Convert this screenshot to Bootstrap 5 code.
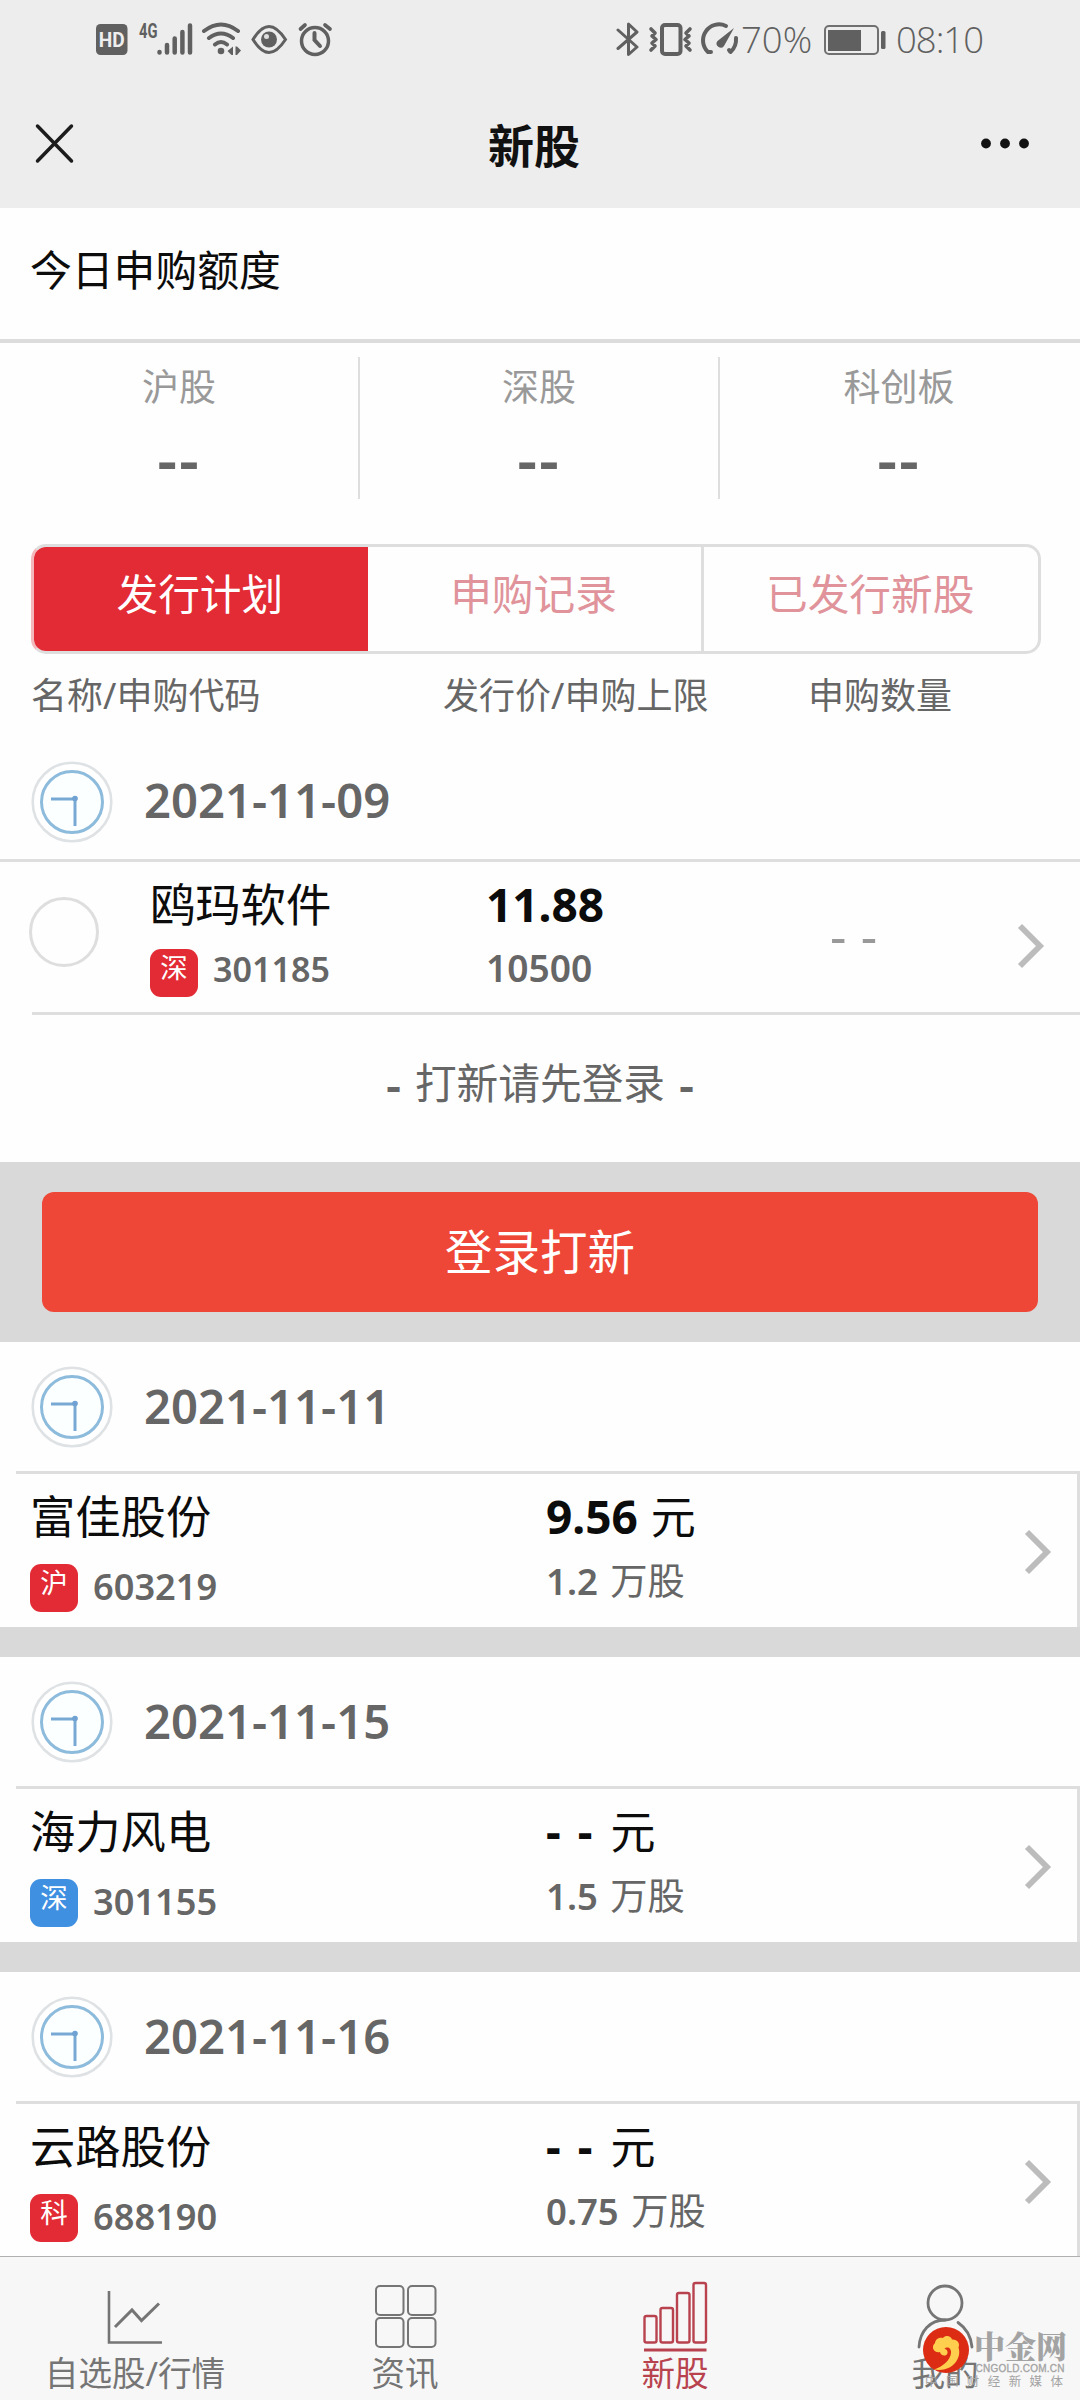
<!DOCTYPE html>
<html lang="zh-CN">
<head>
<meta charset="utf-8">
<meta name="viewport" content="width=device-width, initial-scale=1">
<title>新股</title>
<link href="https://cdn.jsdelivr.net/npm/bootstrap@5.3.0/dist/css/bootstrap.min.css" rel="stylesheet">
<style>
body{width:1080px;height:2400px;overflow:hidden;background:#fefefe;color:#0c0c0c;font-family:"Noto Sans","Noto Sans CJK SC",sans-serif;position:relative}
.screen{height:2400px}
.topbar{height:208px;background:#ededed}
.status{height:78px;padding:0 97px 0 96px;color:#606060}
.status svg{display:block;flex:none}
.status-num{font-family:"Open Sans","Noto Sans",sans-serif;font-weight:300;font-size:36.5px;line-height:40px;white-space:nowrap}
.clock-num{width:95px;letter-spacing:-1px}
.titlebar{height:130px;padding:0 49px 0 34px}
.titlebar h1{font-size:46px;line-height:60px;font-weight:700;color:#111;padding:3px 0 0 13px}
.limit-head{height:135px;border-bottom:4px solid #dcdcdc;padding:0 0 6px 30px;font-size:41.8px}
.quota{padding:14px 2px 0 0}
.quota .col{height:142px;text-align:center}
.quota .col+.col{border-left:2px solid #dedede}
.quota .col:first-child{flex:0 0 358px}
.q-name{font-size:37px;line-height:60px;color:#999}
.q-val{font-size:62px;line-height:60px;font-weight:600;color:#666;letter-spacing:2px;margin-top:11px}
.seg{margin:45px 39px 0 31px;height:110px;border:3px solid #dedede;border-left-color:#f3b9bd;border-radius:15px;overflow:hidden}
.seg .nav-link{border-radius:0;padding:0 2px 10px 0;color:#e0939a;font-size:41.7px;line-height:94px;height:104px}
.seg .nav-link+.nav-link{border-left:3px solid #dedede}
.seg .nav-link.active{background:#e22b35;color:#fff}
.seg .nav-link.active+.nav-link{border-left:0}
.cols{height:91px;padding:22px 0 0 31px;font-size:36px;line-height:40px;color:#666}
.cols span:nth-child(1){width:412px}.cols span:nth-child(2){width:365px}
.day{height:129px;padding:1px 0 0 31px;gap:31px;font-weight:600;font-size:47.2px;line-height:60px;color:#666}
.day.first-day{height:114px;padding-top:0}
.day span{padding-bottom:3px}
.first-day span{padding-bottom:5px}
.item{height:153px;border-right:3px solid #dedede;padding-left:30px}
.rule{height:3px;background:#dedede;margin-left:16px}
.nm{font-size:45.3px;line-height:60px;margin-top:13px;white-space:nowrap}
.pr{font-size:46px;line-height:60px;font-weight:700;margin-top:12px;white-space:nowrap}
.pr i,.qt i{font-style:normal;font-weight:400}
.pr i{font-size:45px;margin-left:1px}
.qt i{font-size:37.3px;margin-left:3px}
.no-price{word-spacing:5px}
.sub2{margin-top:17px;height:48px;gap:15px;font-size:36.2px;line-height:45px;font-weight:600;color:#666}
.qt{margin-top:17px;font-size:36.5px;line-height:34px;font-weight:600;color:#666;white-space:nowrap}
.tag{width:48px;height:48px;border-radius:11px;background:#e22b35;color:#fff;font-size:27.5px;line-height:38px;text-align:center;font-weight:400}
.tag.blue{background:#4090e2}
.c1{width:516px}.c2{width:478px}
.arrow{margin-top:55px;display:block}
.item.featured{height:150px;border:0}
.featured .sub2,.featured .qt{margin-top:14px;line-height:40px}
.featured .sub2{font-size:34.1px}
.featured .qt{font-size:37.2px}
.featured .pick{width:70px;height:70px;border:3px solid #dedede;border-radius:50%;margin:35px 0 0 -1px}
.featured .c1{width:336px;margin-left:51px}
.featured .c2{width:344px}
.featured .amount{width:187px;font-size:51px;line-height:60px;margin-top:43px;color:#999;white-space:nowrap;word-spacing:1px}
.featured .arrow{margin-top:61px}
.prompt{height:147px;font-size:41.7px;color:#666;padding-bottom:10px;gap:14px}
.prompt b{font-size:47px;font-weight:600;line-height:50px}
.band{background:#d9d9d9;height:30px}
.band.login{height:180px;padding:30px 42px}
.login .btn{height:120px;width:100%;background:#ee4737;color:#fff;border:0;border-radius:12px;font-size:47.5px;line-height:60px;padding-bottom:7px}
.tabs{height:144px;bottom:0;left:0;width:1080px;background:#f7f7f7;border-top:1.5px solid #b0b0b0}
.tabs a{text-decoration:none;color:#757575;font-size:33.6px;line-height:36px;padding-top:20px}
.tabs a.on{color:#b8434f}
.tabs svg{display:block;width:80px;height:78px}
.mark-site{right:0;bottom:0;width:160px;height:80px}
.mark-site text{fill:#a3a3a3}
</style>
</head>
<body>
<svg width="0" height="0" class="position-absolute">
<symbol id="clock" viewBox="0 0 82 82"><circle cx="41" cy="41" r="39.300" fill="#fff" stroke="#dfe2e4" stroke-width="2.600"/><circle cx="41" cy="41" r="30.500" fill="#fcffff" stroke="#8dbbdc" stroke-width="3"/><path d="M20 38H44M44 37V65" fill="none" stroke="#78a9d4" stroke-width="3"/><circle cx="44" cy="37.500" r="2.800" fill="#6fa2d2"/></symbol>
<symbol id="chev" viewBox="0 0 28 46"><path d="M3 3L23 23L3 43" fill="none" stroke="#bcbcbc" stroke-width="5.800"/></symbol>
</svg>
<div class="screen d-flex flex-column">
<header class="topbar">
  <div class="status d-flex justify-content-between align-items-center">
    <svg width="240" height="40" viewBox="0 0 240 40" fill="none" stroke="#606060" stroke-linecap="round">
      <rect x="0" y="5" width="31.500" height="31" rx="4.500" fill="#606060" stroke="none"/>
      <text x="15.800" y="28" text-anchor="middle" font-family="Roboto" font-weight="700" font-size="20.500" textLength="26" lengthAdjust="spacingAndGlyphs" fill="#eee" stroke="none">HD</text>
      <text x="43" y="18.500" font-family="Roboto" font-weight="700" font-size="19.500" textLength="18.500" lengthAdjust="spacingAndGlyphs" fill="#606060" stroke="none">4G</text>
      <g stroke-width="4.500"><path d="M63.500 33V33.500M71 26V33.500M78.700 19.500V33.500M86.400 13V33.500M94 6.500V33.500"/></g>
      <g stroke-width="4"><path d="M108 12Q125 -1 142 12M113 19Q125 10 137 19M119 25.500Q125 20.500 131 25.500"/></g>
      <circle cx="125" cy="32" r="3.300" fill="#606060" stroke="none"/>
      <path d="M137 27.500V36H135.500L131.500 32ZM139.500 27.500H141L145 31.500L141 36H139.500Z" fill="#606060" stroke="none"/>
      <path d="M157 20.500Q165 7.500 173 7.500T189.500 20.500Q181 33.500 173 33.500T157 20.500Z" stroke-width="3"/><circle cx="173" cy="20.500" r="8" fill="#606060" stroke="none"/><circle cx="170.500" cy="17.500" r="2.500" fill="#ddd" stroke="none"/>
      <circle cx="219" cy="22" r="13.500" stroke-width="3.500"/><path d="M218.500 14V21L224 27" stroke-width="4"/><path d="M204.500 10L209 6M229 6L234 10" stroke-width="3.700"/>
    </svg>
    <div class="d-flex align-items-center">
      <svg width="125" height="40" viewBox="0 0 125 40" fill="none" stroke="#606060" stroke-linecap="round" stroke-linejoin="round">
        <path d="M2 11L21 28L12.500 35.500V5L21 13L2 29.500" stroke-width="3"/>
        <path d="M35 10L39 14L36 17L40 20.500L36 24L39 27L35 31M74 10L70 14L73 17L69 20.500L73 24L70 27L74 31" stroke-width="3.600"/>
        <rect x="46" y="6" width="18.500" height="29" rx="3" stroke-width="4"/>
        <path d="M110 7A16 16 0 0 0 92 33H95M120 19A17 17 0 0 1 114.500 33L113 31" stroke-width="4"/>
        <path d="M118 9L108 27A4 4 0 0 1 101.500 22Z" fill="#606060" stroke="none"/>
      </svg>
      <span class="status-num" style="width:83px">70%</span>
      <svg width="64" height="40" viewBox="0 0 64 40"><rect x="1" y="7" width="53" height="28" rx="4" fill="none" stroke="#707070" stroke-width="2"/><rect x="4" y="11" width="33" height="21" fill="#606060"/><rect x="57" y="12" width="4.500" height="18" rx="1.500" fill="#606060"/></svg>
      <span class="status-num clock-num ps-2">08:10</span>
    </div>
  </div>
  <div class="titlebar d-flex justify-content-between align-items-center">
    <svg width="42" height="42" viewBox="0 0 42 42"><path d="M3.500 4L37.500 39M37.500 4L3.500 39" stroke="#1c1c1c" stroke-width="3.500" stroke-linecap="round"/></svg>
    <h1 class="m-0">新股</h1>
    <svg width="52" height="12" viewBox="0 0 52 12" fill="#111"><circle cx="7" cy="6.500" r="4.900"/><circle cx="26" cy="6.500" r="4.900"/><circle cx="45" cy="6.500" r="4.900"/></svg>
  </div>
</header>
<main>
  <div class="limit-head d-flex align-items-center">今日申购额度</div>
  <div class="quota row g-0">
    <div class="col"><div class="q-name">沪股</div><div class="q-val">--</div></div>
    <div class="col"><div class="q-name">深股</div><div class="q-val">--</div></div>
    <div class="col"><div class="q-name">科创板</div><div class="q-val">--</div></div>
  </div>
  <nav class="seg nav nav-pills nav-justified flex-nowrap">
    <a class="nav-link active">发行计划</a><a class="nav-link">申购记录</a><a class="nav-link">已发行新股</a>
  </nav>
  <div class="cols d-flex"><span>名称/申购代码</span><span>发行价/申购上限</span><span>申购数量</span></div>

  <div class="day first-day d-flex align-items-center"><svg width="82" height="82"><use href="#clock"/></svg><span>2021-11-09</span></div>
  <div class="rule ms-0"></div>
  <div class="item featured d-flex">
    <div class="pick"></div>
    <div class="c1"><div class="nm">鸥玛软件</div><div class="sub2 d-flex"><span class="tag">深</span>301185</div></div>
    <div class="c2"><div class="pr">11.88</div><div class="qt">10500</div></div>
    <div class="amount">- -</div>
    <svg class="arrow" width="28" height="46"><use href="#chev"/></svg>
  </div>
  <div class="rule" style="margin-left:32px"></div>
  <div class="prompt d-flex align-items-center justify-content-center"><b>-</b>打新请先登录<b>-</b></div>
  <div class="band login"><button class="btn">登录打新</button></div>

  <div class="day d-flex align-items-center"><svg width="82" height="82"><use href="#clock"/></svg><span>2021-11-11</span></div>
  <div class="rule"></div>
  <div class="item d-flex">
    <div class="c1"><div class="nm">富佳股份</div><div class="sub2 d-flex"><span class="tag">沪</span>603219</div></div>
    <div class="c2"><div class="pr">9.56 <i>元</i></div><div class="qt">1.2 <i>万股</i></div></div>
    <svg class="arrow" width="28" height="46"><use href="#chev"/></svg>
  </div>
  <div class="band"></div>

  <div class="day d-flex align-items-center"><svg width="82" height="82"><use href="#clock"/></svg><span>2021-11-15</span></div>
  <div class="rule"></div>
  <div class="item d-flex">
    <div class="c1"><div class="nm">海力风电</div><div class="sub2 d-flex"><span class="tag blue">深</span>301155</div></div>
    <div class="c2"><div class="pr no-price">- - <i>元</i></div><div class="qt">1.5 <i>万股</i></div></div>
    <svg class="arrow" width="28" height="46"><use href="#chev"/></svg>
  </div>
  <div class="band"></div>

  <div class="day d-flex align-items-center"><svg width="82" height="82"><use href="#clock"/></svg><span>2021-11-16</span></div>
  <div class="rule"></div>
  <div class="item d-flex">
    <div class="c1"><div class="nm">云路股份</div><div class="sub2 d-flex"><span class="tag">科</span>688190</div></div>
    <div class="c2"><div class="pr no-price">- - <i>元</i></div><div class="qt">0.75 <i>万股</i></div></div>
    <svg class="arrow" width="28" height="46"><use href="#chev"/></svg>
  </div>
</main>
</div>
<nav class="tabs position-absolute d-flex">
  <a class="col-3 d-flex flex-column align-items-center"><svg viewBox="0 0 80 78" fill="none" stroke="#757575"><path d="M14 14V65.500H67" stroke-width="2.600"/><path d="M20 50L37 33L46.500 43.500L64 26.500" stroke-width="3"/></svg>自选股/行情</a>
  <a class="col-3 d-flex flex-column align-items-center"><svg viewBox="0 0 80 78" fill="none" stroke="#757575" stroke-width="2"><rect x="11" y="9" width="27.500" height="29" rx="4"/><rect x="43" y="9" width="27.500" height="29" rx="4"/><rect x="11" y="41" width="27.500" height="29" rx="4"/><rect x="43" y="41" width="27.500" height="29" rx="4"/></svg>资讯</a>
  <a class="on col-3 d-flex flex-column align-items-center"><svg viewBox="0 0 80 78" fill="none" stroke="#b8434f" stroke-width="2.400"><rect x="9.500" y="39" width="12" height="26.500" rx="2"/><rect x="25.500" y="31" width="12.500" height="34.500" rx="2"/><rect x="42" y="16" width="12.500" height="49.500" rx="2"/><rect x="58.500" y="6" width="12.500" height="59.500" rx="2"/><path d="M9 73H71.500" stroke-width="3"/></svg>新股</a>
  <a class="col-3 d-flex flex-column align-items-center"><svg viewBox="0 0 80 78" fill="none" stroke="#757575" stroke-width="2.800"><circle cx="40" cy="26" r="17"/><path d="M14 70C15 54 25 43 40 43M53 45.500C61 51 66 59 67 70" stroke-linecap="round"/></svg>我的</a>
</nav>
<svg class="mark-site position-absolute" viewBox="0 0 160 80">
  <circle cx="26" cy="30" r="23" fill="#dc2c14"/>
  <path d="M14 49.500C23 46.500 30.500 40 31 33C31.500 28 27 26 24.500 29C26 29 28 30.500 27.500 33C26.500 37 20.500 36 20 32C14 33.500 10.500 27 15 23C15.500 18.500 20 17 23 18C26 14.500 31 16 32 19.500C37 19 40.500 23 38.500 27.500C42 38 33 50 19 50Z" fill="#ffcf4d"/>
  <text x="54" y="38" font-family="Noto Serif CJK SC,Noto Sans CJK SC" font-weight="900" font-size="31">中金网</text>
  <text x="55.500" y="52" font-family="Liberation Sans" font-size="10" textLength="89" stroke="#a3a3a3" stroke-width=".3">CNGOLD.COM.CN</text>
  <text x="5" y="66" font-family="Noto Sans CJK SC" font-size="12.500" textLength="138">中国财经新媒体</text>
</svg>
<script src="https://cdn.jsdelivr.net/npm/bootstrap@5.3.0/dist/js/bootstrap.bundle.min.js"></script>
</body>
</html>
